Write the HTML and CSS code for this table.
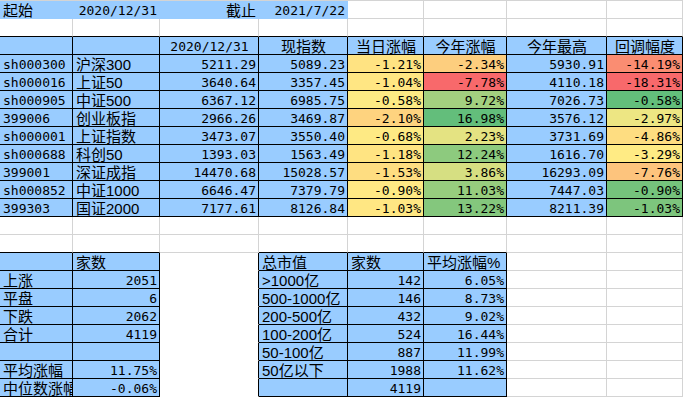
FILE: index.html
```html
<!DOCTYPE html>
<html lang="zh">
<head>
<meta charset="utf-8">
<title>指数涨幅</title>
<link rel="stylesheet" href="styles.css">
</head>
<body>
<div class="sheet">
  <!-- row 0 -->
  <div class="c fill">起始</div>
  <div class="c fill num">2020/12/31</div>
  <div class="c fill r">截止</div>
  <div class="c fill num">2021/7/22</div>
  <div class="c"></div><div class="c"></div><div class="c"></div><div class="c"></div>
  <!-- row 1 -->
  <div class="c bb"></div><div class="c bb"></div><div class="c bb"></div><div class="c bb"></div>
  <div class="c bb"></div><div class="c bb"></div><div class="c bb"></div><div class="c bb"></div>
  <!-- row 2 header -->
  <div class="c t blue"></div>
  <div class="c t blue"></div>
  <div class="c t blue ctr mono">2020/12/31</div>
  <div class="c t blue ctr">现指数</div>
  <div class="c t blue ctr">当日涨幅</div>
  <div class="c t blue ctr">今年涨幅</div>
  <div class="c t blue ctr">今年最高</div>
  <div class="c t blue ctr">回调幅度</div>
  <!-- data -->
  <div class="c t blue mono">sh000300</div><div class="c t blue">沪深300</div><div class="c t blue num">5211.29</div><div class="c t blue num">5089.23</div><div class="c t num" style="background:#FFE382">-1.21%</div><div class="c t num" style="background:#FDCE7E">-2.34%</div><div class="c t blue num">5930.91</div><div class="c t num" style="background:#FA8D72">-14.19%</div>
  <div class="c t blue mono">sh000016</div><div class="c t blue">上证50</div><div class="c t blue num">3640.64</div><div class="c t blue num">3357.45</div><div class="c t num" style="background:#FFE683">-1.04%</div><div class="c t num" style="background:#F8696B">-7.78%</div><div class="c t blue num">4110.18</div><div class="c t num" style="background:#F8696B">-18.31%</div>
  <div class="c t blue mono">sh000905</div><div class="c t blue">中证500</div><div class="c t blue num">6367.12</div><div class="c t blue num">6985.75</div><div class="c t num" style="background:#FDEA84">-0.58%</div><div class="c t num" style="background:#A3D07F">9.72%</div><div class="c t blue num">7026.73</div><div class="c t num" style="background:#63BE7B">-0.58%</div>
  <div class="c t blue mono">399006</div><div class="c t blue">创业板指</div><div class="c t blue num">2966.26</div><div class="c t blue num">3469.87</div><div class="c t num" style="background:#FED37F">-2.10%</div><div class="c t num" style="background:#63BE7B">16.98%</div><div class="c t blue num">3576.12</div><div class="c t num" style="background:#EDE683">-2.97%</div>
  <div class="c t blue mono">sh000001</div><div class="c t blue">上证指数</div><div class="c t blue num">3473.07</div><div class="c t blue num">3550.40</div><div class="c t num" style="background:#FEEA84">-0.68%</div><div class="c t num" style="background:#E4E382">2.23%</div><div class="c t blue num">3731.69</div><div class="c t num" style="background:#FEDD81">-4.86%</div>
  <div class="c t blue mono">sh000688</div><div class="c t blue">科创50</div><div class="c t blue num">1393.03</div><div class="c t blue num">1563.49</div><div class="c t num" style="background:#FFE482">-1.18%</div><div class="c t num" style="background:#8DCA7E">12.24%</div><div class="c t blue num">1616.70</div><div class="c t num" style="background:#FFEB84">-3.29%</div>
  <div class="c t blue mono">399001</div><div class="c t blue">深证成指</div><div class="c t blue num">14470.68</div><div class="c t blue num">15028.57</div><div class="c t num" style="background:#FEDD81">-1.53%</div><div class="c t num" style="background:#D6DF82">3.86%</div><div class="c t blue num">16293.09</div><div class="c t num" style="background:#FDC47D">-7.76%</div>
  <div class="c t blue mono">sh000852</div><div class="c t blue">中证1000</div><div class="c t blue num">6646.47</div><div class="c t blue num">7379.79</div><div class="c t num" style="background:#FFE984">-0.90%</div><div class="c t num" style="background:#97CD7E">11.03%</div><div class="c t blue num">7447.03</div><div class="c t num" style="background:#75C37C">-0.90%</div>
  <div class="c t blue mono">399303</div><div class="c t blue">国证2000</div><div class="c t blue num">7177.61</div><div class="c t blue num">8126.84</div><div class="c t num" style="background:#FFE783">-1.03%</div><div class="c t num" style="background:#84C77D">13.22%</div><div class="c t blue num">8211.39</div><div class="c t num" style="background:#7DC57D">-1.03%</div>
  <!-- row 12 -->
  <div class="c"></div><div class="c"></div><div class="c"></div><div class="c"></div>
  <div class="c"></div><div class="c"></div><div class="c"></div><div class="c"></div>
  <!-- row 13 -->
  <div class="c bb"></div><div class="c bb"></div><div class="c"></div><div class="c bb"></div>
  <div class="c bb"></div><div class="c bb"></div><div class="c"></div><div class="c"></div>
  <!-- row 14 -->
  <div class="c t blue"></div><div class="c t blue">家数</div><div class="c gap"></div>
  <div class="c t blue">总市值</div><div class="c t blue">家数</div><div class="c t blue">平均涨幅%</div>
  <div class="c"></div><div class="c"></div>
  <!-- row 15 -->
  <div class="c t blue">上涨</div><div class="c t blue num">2051</div><div class="c gap"></div>
  <div class="c t blue">&gt;1000亿</div><div class="c t blue num">142</div><div class="c t blue num">6.05%</div>
  <div class="c"></div><div class="c"></div>
  <!-- row 16 -->
  <div class="c t blue">平盘</div><div class="c t blue num">6</div><div class="c gap"></div>
  <div class="c t blue">500-1000亿</div><div class="c t blue num">146</div><div class="c t blue num">8.73%</div>
  <div class="c"></div><div class="c"></div>
  <!-- row 17 -->
  <div class="c t blue">下跌</div><div class="c t blue num">2062</div><div class="c gap"></div>
  <div class="c t blue">200-500亿</div><div class="c t blue num">432</div><div class="c t blue num">9.02%</div>
  <div class="c"></div><div class="c"></div>
  <!-- row 18 -->
  <div class="c t blue">合计</div><div class="c t blue num">4119</div><div class="c gap"></div>
  <div class="c t blue">100-200亿</div><div class="c t blue num">524</div><div class="c t blue num">16.44%</div>
  <div class="c"></div><div class="c"></div>
  <!-- row 19 -->
  <div class="c t blue"></div><div class="c t blue"></div><div class="c gap"></div>
  <div class="c t blue">50-100亿</div><div class="c t blue num">887</div><div class="c t blue num">11.99%</div>
  <div class="c"></div><div class="c"></div>
  <!-- row 20 -->
  <div class="c t blue">平均涨幅</div><div class="c t blue num">11.75%</div><div class="c gap"></div>
  <div class="c t blue">50亿以下</div><div class="c t blue num">1988</div><div class="c t blue num">11.62%</div>
  <div class="c"></div><div class="c"></div>
  <!-- row 21 -->
  <div class="c t blue clip">中位数涨幅</div><div class="c t blue num">-0.06%</div><div class="c gap"></div>
  <div class="c t blue"></div><div class="c t blue num">4119</div><div class="c t blue"></div>
  <div class="c"></div><div class="c"></div>
</div>
</body>
</html>
```

FILE: styles.css
```css
html, body {
  margin: 0;
  padding: 0;
  background: #ffffff;
}

.sheet {
  display: grid;
  grid-template-columns: 73px 87px 99px 89px 76px 83px 100px 76px;
  grid-auto-rows: 18px;
  border-top: 1px solid #d4d4d4;
  width: 683px;
  font-family: "Liberation Sans", "Noto Sans CJK SC", sans-serif;
  font-size: 15px;
  color: #000000;
}

.c {
  box-sizing: border-box;
  border-right: 1px solid #d4d4d4;
  border-bottom: 1px solid #d4d4d4;
  padding: 2px 2px 0 3px;
  line-height: 16px;
  white-space: nowrap;
  overflow: hidden;
}

.fill {
  background: #99ccff;
  border-color: #99ccff;
}

.blue {
  background: #99ccff;
}

.t {
  border-right-color: #000000;
  border-bottom-color: #000000;
}

.bb {
  border-bottom-color: #000000;
}

.gap {
  border-right-color: #000000;
  border-bottom-color: #ffffff;
}

.num {
  font-family: "DejaVu Sans Mono", "Noto Sans CJK SC", monospace;
  font-size: 13px;
  text-align: right;
  padding-right: 2px;
}

.mono {
  font-family: "DejaVu Sans Mono", "Noto Sans CJK SC", monospace;
  font-size: 13px;
}

.r {
  text-align: right;
}

.ctr {
  text-align: center;
}

.clip {
  text-overflow: clip;
}
```
